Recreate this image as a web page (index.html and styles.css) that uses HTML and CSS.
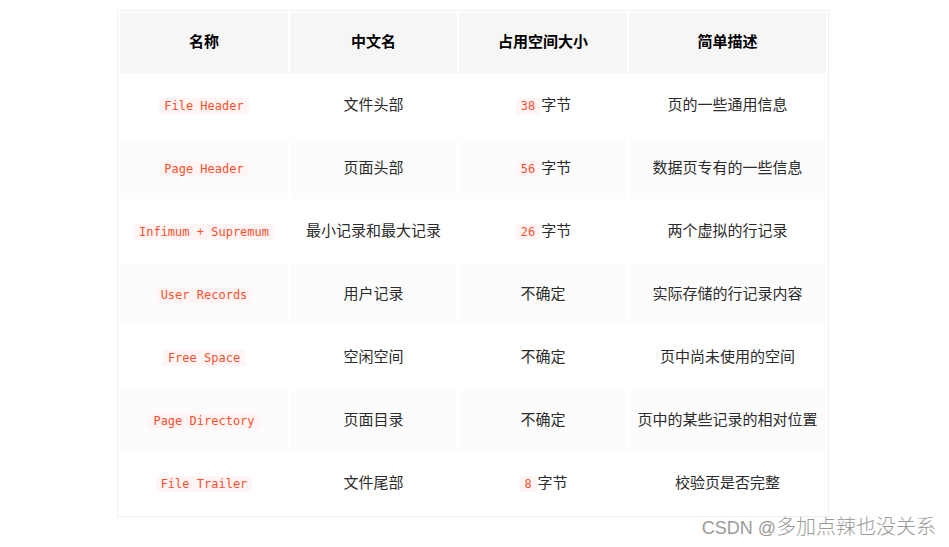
FILE: index.html
```html
<!DOCTYPE html>
<html lang="zh-CN">
<head>
<meta charset="utf-8">
<title>InnoDB 页结构</title>
<link rel="stylesheet" href="styles.css">
</head>
<body>
<div class="page">
  <table class="grid">
    <colgroup>
      <col class="c1"><col class="c2"><col class="c3"><col class="c4">
    </colgroup>
    <thead>
      <tr><th>名称</th><th>中文名</th><th>占用空间大小</th><th>简单描述</th></tr>
    </thead>
    <tbody>
      <tr><td><code>File Header</code></td><td>文件头部</td><td><code>38</code>字节</td><td>页的一些通用信息</td></tr>
      <tr><td><code>Page Header</code></td><td>页面头部</td><td><code>56</code>字节</td><td>数据页专有的一些信息</td></tr>
      <tr><td><code>Infimum + Supremum</code></td><td>最小记录和最大记录</td><td><code>26</code>字节</td><td>两个虚拟的行记录</td></tr>
      <tr><td><code>User Records</code></td><td>用户记录</td><td>不确定</td><td>实际存储的行记录内容</td></tr>
      <tr><td><code>Free Space</code></td><td>空闲空间</td><td>不确定</td><td>页中尚未使用的空间</td></tr>
      <tr><td><code>Page Directory</code></td><td>页面目录</td><td>不确定</td><td>页中的某些记录的相对位置</td></tr>
      <tr><td><code>File Trailer</code></td><td>文件尾部</td><td><code>8</code>字节</td><td>校验页是否完整</td></tr>
    </tbody>
  </table>
</div>
<div class="watermark"><span class="wm-latin">CSDN @</span><span class="wm-cjk">多加点辣也没关系</span></div>
</body>
</html>
```
FILE: styles.css
```css
html, body {
  margin: 0;
  padding: 0;
  background: #fff;
}
body {
  width: 949px;
  height: 547px;
  overflow: hidden;
  position: relative;
  font-family: "Noto Sans CJK SC", "Noto Sans", sans-serif;
  color: #2b2b2b;
}
.page {
  padding: 10px 0 0 117px;
}
.grid {
  border-collapse: separate;
  border-spacing: 2px;
  border: 1px solid #f0f0f0;
  table-layout: fixed;
  width: 712px;
  font-size: 15px;
}
.c1 { width: 168px; }
.c2 { width: 167px; }
.c3 { width: 168px; }
.c4 { width: 197px; }
.grid th, .grid td {
  padding: 0 0 4px 0;
  text-align: center;
  vertical-align: middle;
  line-height: 20px;
}
.grid th {
  height: 56px;
  background: #f6f6f6;
  color: #000;
  font-weight: bold;
}
.grid td {
  height: 57px;
  background: #fff;
}
.grid tbody tr:nth-child(even) td {
  background: #fcfcfc;
}
code {
  font-family: "DejaVu Sans Mono", monospace;
  font-size: 12px;
  line-height: 14px;
  color: #ff502c;
  background: #fff5f5;
  padding: 1px 5px;
  margin: 0 1px;
  border-radius: 2px;
}
.watermark {
  position: absolute;
  right: 13px;
  top: 513px;
  color: #9b9b9b;
  white-space: nowrap;
  line-height: 26px;
  text-shadow: 0 0 1px #fff;
}
.wm-latin {
  font-family: "Liberation Sans", Arial, sans-serif;
  font-size: 18px;
}
.wm-cjk {
  font-family: "Noto Sans CJK SC", sans-serif;
  font-size: 20px;
  font-weight: 300;
}
```
